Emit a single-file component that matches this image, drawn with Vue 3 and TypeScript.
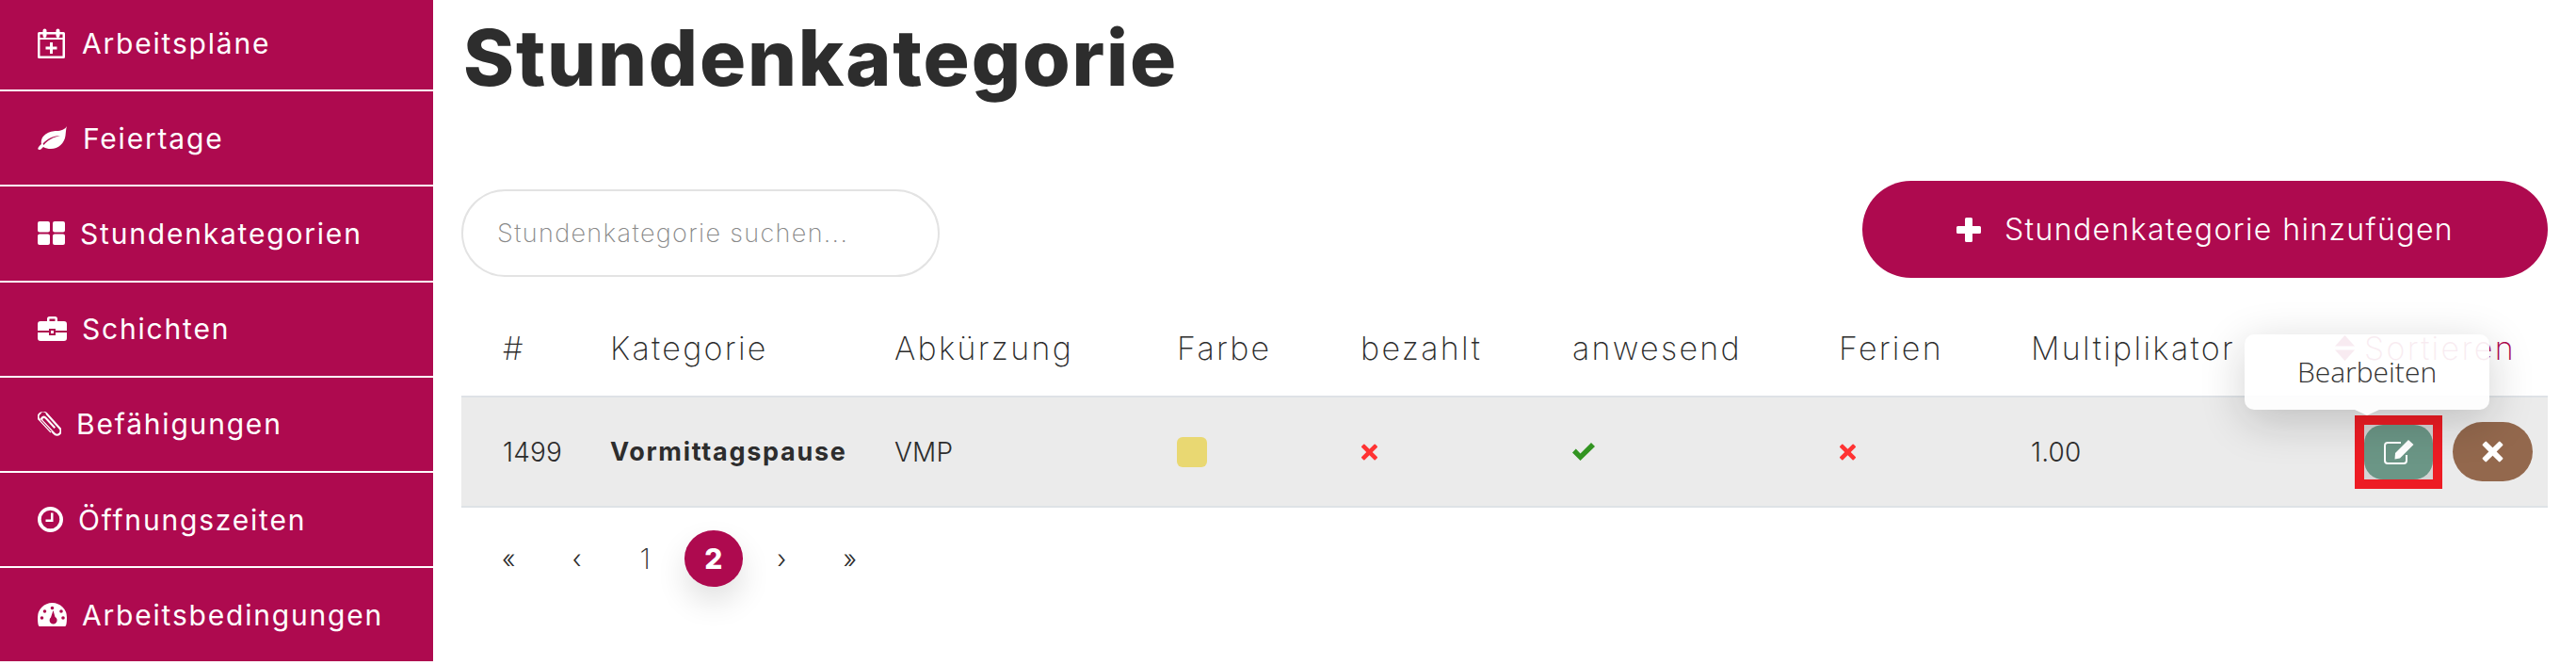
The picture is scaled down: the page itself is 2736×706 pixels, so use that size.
<template>
  <div class="page">
    <aside class="sidebar">
      <a v-for="item in navItems" :key="item.label" class="nav-item" href="#">
        <svg class="nav-icon" :width="item.w" :height="item.h" :viewBox="`0 0 ${item.w} ${item.h}`">
          <path :d="item.d" fill="currentColor" fill-rule="evenodd" />
        </svg>
        <span class="nav-label" :style="{ marginLeft: item.gap + 'px' }">{{ item.label }}</span>
      </a>
    </aside>

    <main class="content">
      <h1 class="title">Stundenkategorie</h1>

      <div class="toolbar">
        <input class="search" type="text" placeholder="Stundenkategorie suchen..." />
        <button class="add-btn" type="button">
          <svg width="26" height="26" viewBox="0 0 26 26">
            <path d="M10.5 0h5a1.5 1.5 0 0 1 1.5 1.5V9h7.5A1.5 1.5 0 0 1 26 10.5v5a1.5 1.5 0 0 1-1.5 1.5H17v7.5a1.5 1.5 0 0 1-1.5 1.5h-5A1.5 1.5 0 0 1 9 24.5V17H1.500A1.500 1.500 0 0 1 0 15.500v-5A1.500 1.500 0 0 1 1.500 9H9V1.500A1.500 1.500 0 0 1 10.500 0Z" fill="currentColor" />
          </svg>
          <span>Stundenkategorie hinzufügen</span>
        </button>
      </div>

      <div class="table">
        <div class="row head">
          <span v-for="col in columns" :key="col">{{ col }}</span>
          <span class="sort-head">
            <svg width="21" height="27" viewBox="0 0 21 27">
              <path d="M10.500 0 21 11.500H0ZM0 15.500H21L10.500 27Z" fill="currentColor" />
            </svg>
            Sortieren
          </span>
        </div>

        <div class="row body">
          <span>1499</span>
          <strong>Vormittagspause</strong>
          <span>VMP</span>
          <span><i class="swatch"></i></span>
          <span class="no"><svg width="19" height="18" viewBox="0 0 100 100"><path :d="crossPath" fill="currentColor" /></svg></span>
          <span class="yes">
            <svg width="24" height="19" viewBox="0 0 24 19"><path d="M0 10.500 3.800 6.500 8.500 11.500 20 0l4 4L8.500 19Z" fill="currentColor" /></svg>
          </span>
          <span class="no"><svg width="19" height="18" viewBox="0 0 100 100"><path :d="crossPath" fill="currentColor" /></svg></span>
          <span>1.00</span>
          <span class="actions">
            <span class="edit-wrap">
              <button class="edit-btn" type="button">
                <svg width="32" height="26" viewBox="0 0 32 26">
                  <path d="M24 16v6a3 3 0 0 1-3 3H4a3 3 0 0 1-3-3V6a3 3 0 0 1 3-3h14" fill="none" stroke="currentColor" stroke-width="2" />
                  <path d="M26 0l5.500 5L17 19.500l-5.500 1 .5-6.500Z" fill="currentColor" />
                </svg>
              </button>
              <span class="tooltip">Bearbeiten</span>
            </span>
            <button class="delete-btn" type="button">
              <svg width="23" height="23" viewBox="0 0 100 100"><path :d="crossPath" fill="currentColor" /></svg>
            </button>
          </span>
        </div>
      </div>

      <nav class="pager">
        <a v-for="page in pages" :key="page" :class="['page-link', { active: page === '2', num: page === '1' }]">{{ page }}</a>
      </nav>
    </main>
  </div>
</template>

<script setup lang="ts">
interface NavItem {
  label: string
  w: number
  h: number
  d: string
  gap: number
}

// a full circle as a sub path, holes in the evenodd icons are made with it
function dot(x: number, y: number, r: number) {
  return `M${x - r} ${y}a${r} ${r} 0 1 0 ${2 * r} 0a${r} ${r} 0 1 0 ${-2 * r} 0Z`
}

const crossPath = 'M22 4 50 32 78 4a5 5 0 0 1 7 0L96 15a5 5 0 0 1 0 7L68 50l28 28a5 5 0 0 1 0 7L85 96a5 5 0 0 1-7 0L50 68 22 96a5 5 0 0 1-7 0L4 85a5 5 0 0 1 0-7L32 50 4 22a5 5 0 0 1 0-7L15 4a5 5 0 0 1 7 0Z'

const navItems: NavItem[] = [
  {
    label: 'Arbeitspläne',
    w: 29,
    h: 32,
    gap: 18,
    d: 'M1.500 4H5.500V2.500a2 2 0 0 1 4 0V4H19.500V2.500a2 2 0 0 1 4 0V4H27.500A1.500 1.500 0 0 1 29 5.500V30.500A1.500 1.500 0 0 1 27.500 32H1.500A1.500 1.500 0 0 1 0 30.500V5.500A1.500 1.500 0 0 1 1.500 4ZM2.500 12V29.500H26.500V12ZM13 15H16V19.500H20.500V22.500H16V27H13V22.500H8.500V19.500H13ZM2.500 6.500V10H26.500V6.500H23.500V8a2 2 0 0 1-4 0V6.500H9.500V8a2 2 0 0 1-4 0V6.500Z',
  },
  {
    label: 'Feiertage',
    w: 31,
    h: 25,
    gap: 17,
    d: 'M31 0C30 3 30 6 29.500 10 28.500 18 22 24 14 24 11 24 8.500 23.500 6 22 4.500 23.500 3.500 25 2 25 .5 25 0 24 .5 23 1 21.500 3 20 4 19 2.500 9 13 5 20 5 25 5 29 3.500 31 0ZM6.500 20C11 14.500 17 11.500 24 10 16 10.500 10 13.500 5.500 18.500Z',
  },
  {
    label: 'Stundenkategorien',
    w: 29,
    h: 25,
    gap: 16,
    d: 'M2 0H11a2 2 0 0 1 2 2V9.500a2 2 0 0 1-2 2H2a2 2 0 0 1-2-2V2a2 2 0 0 1 2-2ZM18 0H27a2 2 0 0 1 2 2V9.500a2 2 0 0 1-2 2H18a2 2 0 0 1-2-2V2a2 2 0 0 1 2-2ZM2 13.500H11a2 2 0 0 1 2 2V23a2 2 0 0 1-2 2H2a2 2 0 0 1-2-2V15.500a2 2 0 0 1 2-2ZM18 13.500H27a2 2 0 0 1 2 2V23a2 2 0 0 1-2 2H18a2 2 0 0 1-2-2V15.500a2 2 0 0 1 2-2Z',
  },
  {
    label: 'Schichten',
    w: 31,
    h: 26,
    gap: 16,
    d: 'M10 5V2.500A2.500 2.500 0 0 1 12.500 0H18.500A2.500 2.500 0 0 1 21 2.500V5H28A3 3 0 0 1 31 8V15H19V13H12V15H0V8A3 3 0 0 1 3 5ZM12.500 2.500V5H18.500V2.500ZM0 17H12V20H19V17H31V23A3 3 0 0 1 28 26H3A3 3 0 0 1 0 23ZM14 15H17V18H14Z',
  },
  {
    label: 'Befähigungen',
    w: 25,
    h: 26,
    gap: 16,
    d: 'M5 .3A5 5 0 0 1 10.500 1.800L24.300 17a5 5 0 0 1-.4 7.500 5 5 0 0 1-7.200-.4L4 10.500A3.500 3.500 0 0 1 4.300 5.500 3.500 3.500 0 0 1 9.300 6L19 16.500 17.500 18 7.800 7.500A1.400 1.400 0 0 0 5.800 7.300 1.400 1.400 0 0 0 5.700 9.200L18.300 22.600A2.900 2.900 0 0 0 22.300 22.900 2.900 2.900 0 0 0 22.700 18.500L9 3.300A3 3 0 0 0 3.200 2.500 3.200 3.200 0 0 0 2.700 7.800L15 21 13.500 22.500 1.200 9.300A5.200 5.200 0 0 1 1.500 1.500 5 5 0 0 1 5 .3Z',
  },
  {
    label: 'Öffnungszeiten',
    w: 27,
    h: 27,
    gap: 16,
    d: dot(13.5, 13.5, 13.5) + dot(13.5, 13.5, 9.8) + 'M14 6.500H16.500V16H8.500V13.500H14Z',
  },
  {
    label: 'Arbeitsbedingungen',
    w: 31,
    h: 25,
    gap: 16,
    d: 'M2 25C.7 25 0 22 0 15.500A15.500 15.500 0 0 1 31 15.500C31 22 30.300 25 29 25Z' +
      dot(4.5, 16, 1.8) + dot(7.5, 9, 1.8) + dot(15.5, 5.5, 1.8) + dot(25, 9, 1.8) + dot(27, 16, 1.8) +
      'M16.500 8 18.500 15A4 4 0 1 1 14 15.500Z',
  },
]

const columns = ['#', 'Kategorie', 'Abkürzung', 'Farbe', 'bezahlt', 'anwesend', 'Ferien', 'Multiplikator']
const pages = ['«', '‹', '1', '2', '›', '»']
</script>

<style>
html,
body {
  margin: 0;
  background: #fff;
}
</style>

<style scoped>
.page {
  display: flex;
  width: 2736px;
  height: 706px;
  overflow: hidden;
  font-family: Inter, "Noto Sans", sans-serif;
  color: #2d2d2d;
}
.sidebar {
  flex: 0 0 460px;
  margin-top: -4px;
}
.nav-item {
  display: flex;
  align-items: center;
  box-sizing: border-box;
  height: 101.2px;
  padding: 0 0 0 40px;
  background: #ae0a4f;
  border-bottom: 2px solid #fff;
  color: #fff;
  font-size: 30px;
  letter-spacing: 1.8px;
  text-decoration: none;
}
.nav-icon {
  flex: none;
}
.content {
  flex: 1;
  padding: 0 30px 0 30px;
  min-width: 0;
}
.title {
  margin: 16px 0 0 2px;
  font-size: 82px;
  line-height: 92px;
  font-weight: 800;
  letter-spacing: 1.8px;
}
.toolbar {
  display: flex;
  align-items: center;
  justify-content: space-between;
  height: 103px;
  margin-top: 84px;
}
.search {
  box-sizing: border-box;
  width: 508px;
  height: 93px;
  margin-top: 7px;
  padding: 0 36px;
  border: 2px solid #e3e3e3;
  border-radius: 47px;
  font-family: inherit;
  font-size: 27px;
  font-weight: 200;
  letter-spacing: 1.35px;
  outline: none;
}
.search::placeholder {
  color: #888;
}
.add-btn {
  display: flex;
  align-items: center;
  justify-content: center;
  gap: 25px;
  width: 728px;
  height: 103px;
  border: 0;
  border-radius: 52px;
  background: #ae0a4f;
  color: #fff;
  font-family: inherit;
  font-size: 32px;
  font-weight: 300;
  letter-spacing: 1.4px;
}
.row {
  display: grid;
  grid-template-columns: 114px 302px 300px 195px 225px 283px 204px 323px 1fr;
  align-items: center;
  padding-left: 44px;
}
.head {
  height: 125px;
  padding-top: 23px;
  box-sizing: border-box;
  font-size: 34px;
  font-weight: 200;
  letter-spacing: 2.3px;
}
.sort-head {
  display: flex;
  align-items: center;
  gap: 10px;
  color: #ae0a4f;
  white-space: nowrap;
}
.body {
  height: 119px;
  box-sizing: border-box;
  background: #ebebeb;
  border-top: 2px solid #dee2e6;
  border-bottom: 2px solid #dee2e6;
  font-size: 28px;
  font-weight: 300;
  letter-spacing: 0.2px;
}
.body strong {
  font-size: 27px;
  font-weight: 700;
  letter-spacing: 1.7px;
  white-space: nowrap;
}
.swatch {
  display: block;
  width: 32px;
  height: 32px;
  border-radius: 6px;
  background: #e9d872;
}
.no {
  display: flex;
  color: #ff3333;
}
.yes {
  display: flex;
  color: #329421;
}
.actions {
  display: flex;
  align-items: center;
  gap: 21px;
  padding-left: 31px;
  white-space: nowrap;
}
.edit-wrap {
  position: relative;
  display: block;
  background: #d4d4d4;
  outline: 10px solid #ed1c24;
}
.edit-btn {
  display: flex;
  align-items: center;
  justify-content: center;
  width: 73px;
  height: 58px;
  padding: 0;
  border: 0;
  border-radius: 20px;
  background: #6b9686;
  color: #fff;
}
.tooltip {
  position: absolute;
  left: -127px;
  top: -96px;
  width: 260px;
  height: 80px;
  display: flex;
  align-items: center;
  justify-content: center;
  background: #fff;
  opacity: 0.92;
  border-radius: 10px;
  box-shadow: 0 12px 48px rgba(0, 0, 0, 0.2);
  color: #222;
  font-family: "Open Sans", sans-serif;
  font-size: 30px;
  letter-spacing: 0;
  z-index: 2;
}
.tooltip::after {
  content: "";
  position: absolute;
  left: 50%;
  bottom: -6px;
  margin-left: -13px;
  border-left: 13px solid transparent;
  border-right: 13px solid transparent;
  border-top: 6px solid #fff;
}
.delete-btn {
  display: flex;
  align-items: center;
  justify-content: center;
  width: 85px;
  height: 63px;
  padding: 0;
  border: 0;
  border-radius: 32px;
  background: #93684d;
  color: #fff;
}
.pager {
  display: flex;
  align-items: center;
  gap: 10px;
  margin-top: 24px;
  padding-left: 19px;
}
.page-link {
  display: flex;
  align-items: center;
  justify-content: center;
  width: 62.500px;
  height: 60px;
  border-radius: 50%;
  font-size: 27px;
  font-weight: 300;
}
.page-link.num {
  font-size: 30px;
  font-weight: 200;
}
.page-link.active {
  background: #ae0a4f;
  color: #fff;
  font-size: 30px;
  font-weight: 800;
  box-shadow: 0 16px 32px rgba(0, 0, 0, 0.12);
}
</style>
